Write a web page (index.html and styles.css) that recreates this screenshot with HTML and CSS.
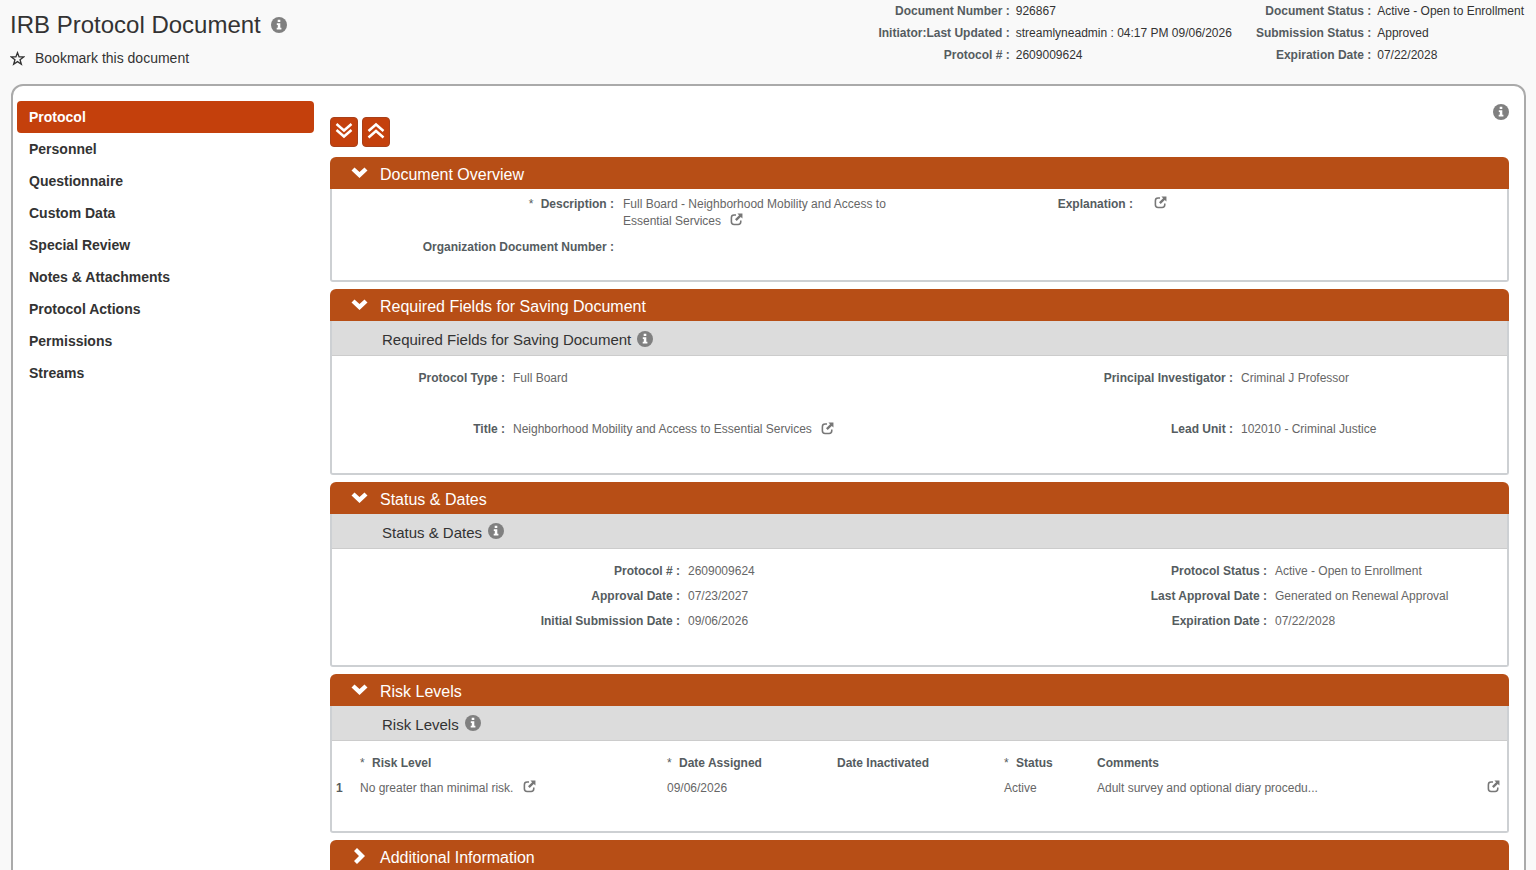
FILE: index.html
```html
<!DOCTYPE html>
<html lang="en">
<head>
    <meta charset="UTF-8">
    <meta name="viewport" content="width=device-width, initial-scale=1.0">
    <title>IRB Protocol Document</title>
    <link rel="stylesheet" href="styles.css">
</head>
<body>

    <!-- shared icons -->
    <svg class="sprite" aria-hidden="true">
        <symbol id="icon-info" viewBox="0 0 16 16">
            <circle cx="8" cy="8" r="8" fill="currentColor"/>
            <path d="M6.7 2.8h2.6v2.1H6.7zM5.8 6.2h3.5v4.6h1.1v1.7H5.7v-1.7h1.1V7.9h-1z" fill="#fff"/>
        </symbol>
        <symbol id="icon-edit" viewBox="0 0 14 14">
            <path d="M6.5 2.2H4.4A2.9 2.9 0 0 0 1.5 5.1v4.3a2.9 2.9 0 0 0 2.9 2.9h4.3a2.9 2.9 0 0 0 2.9-2.9V8.2" fill="none" stroke="currentColor" stroke-width="1.7"/>
            <path d="M8 .6h5.4V6l-1.8-1.8-4.4 4.4-1.8-1.8 4.4-4.4z" fill="currentColor"/>
        </symbol>
        <symbol id="icon-down" viewBox="0 0 16 16">
            <path d="M3 2.500l5 4.500 5-4.500 3 3-8 7.500-8-7.500z" fill="currentColor"/>
        </symbol>
        <symbol id="icon-right" viewBox="0 0 16 16">
            <path d="M5.500 0l8 8-8 8-3-3 5-5-5-5z" fill="currentColor"/>
        </symbol>
        <symbol id="icon-expand" viewBox="0 0 18 18">
            <path d="M1.500 2L9 8.500l7.500-6.500M1.500 8L9 14.500l7.500-6.500" fill="none" stroke="currentColor" stroke-width="2.500"/>
        </symbol>
        <symbol id="icon-collapse" viewBox="0 0 18 18">
            <path d="M1.500 9L9 2.500l7.500 6.500M1.500 15.500L9 9l7.500 6.500" fill="none" stroke="currentColor" stroke-width="2.500"/>
        </symbol>
        <symbol id="icon-star" viewBox="0 0 16 16">
            <path d="M8 1.800l1.700 4.500h4.900l-3.900 3 1.400 4.800L8 11.300l-4.100 2.800 1.400-4.800-3.900-3h4.900z" fill="none" stroke="currentColor" stroke-width="1.400"/>
        </symbol>
    </svg>

    <header class="doc-header">
        <div class="doc-title">
            <h1>IRB Protocol Document
                <button type="button" class="info-btn" aria-label="Document help"><svg><use href="#icon-info"/></svg></button>
            </h1>
            <button type="button" class="bookmark"><svg><use href="#icon-star"/></svg>Bookmark this document</button>
        </div>
        <div class="doc-info">
            <dl>
                <dt>Document Number :</dt><dd>926867</dd>
                <dt>Initiator:Last Updated :</dt><dd>streamlyneadmin : 04:17 PM 09/06/2026</dd>
                <dt>Protocol # :</dt><dd>2609009624</dd>
            </dl>
            <dl>
                <dt>Document Status :</dt><dd>Active - Open to Enrollment</dd>
                <dt>Submission Status :</dt><dd>Approved</dd>
                <dt>Expiration Date :</dt><dd>07/22/2028</dd>
            </dl>
        </div>
    </header>

    <div class="workspace">
        <nav class="side-nav">
            <a href="#protocol" class="active">Protocol</a>
            <a href="#personnel">Personnel</a>
            <a href="#questionnaire">Questionnaire</a>
            <a href="#custom">Custom Data</a>
            <a href="#special">Special Review</a>
            <a href="#notes">Notes &amp; Attachments</a>
            <a href="#actions">Protocol Actions</a>
            <a href="#permissions">Permissions</a>
            <a href="#streams">Streams</a>
        </nav>

        <main class="content">
            <div class="toolbar">
                <button type="button" class="tool-btn" aria-label="Expand all"><svg><use href="#icon-expand"/></svg></button>
                <button type="button" class="tool-btn" aria-label="Collapse all"><svg><use href="#icon-collapse"/></svg></button>
                <button type="button" class="info-btn page-help" aria-label="Page help"><svg><use href="#icon-info"/></svg></button>
            </div>

            <section class="panel">
                <h2><button type="button" class="panel-head" aria-expanded="true"><svg><use href="#icon-down"/></svg>Document Overview</button></h2>
                <div class="panel-body">
                    <dl class="fields overview">
                        <dt><span class="req">*</span> Description :</dt>
                        <dd>Full Board - Neighborhood Mobility and Access to Essential Services <button type="button" class="edit-btn" aria-label="Edit description"><svg><use href="#icon-edit"/></svg></button></dd>
                        <dt>Explanation :</dt>
                        <dd class="icon-only"><button type="button" class="edit-btn" aria-label="Edit explanation"><svg><use href="#icon-edit"/></svg></button></dd>
                        <dt>Organization Document Number :</dt>
                        <dd></dd>
                    </dl>
                </div>
            </section>

            <section class="panel">
                <h2><button type="button" class="panel-head" aria-expanded="true"><svg><use href="#icon-down"/></svg>Required Fields for Saving Document</button></h2>
                <div class="panel-body">
                    <h3>Required Fields for Saving Document <button type="button" class="info-btn" aria-label="Required fields help"><svg><use href="#icon-info"/></svg></button></h3>
                    <dl class="fields required">
                        <dt>Protocol Type :</dt><dd>Full Board</dd>
                        <dt>Principal Investigator :</dt><dd>Criminal J Professor</dd>
                        <dt>Title :</dt>
                        <dd>Neighborhood Mobility and Access to Essential Services <button type="button" class="edit-btn" aria-label="Edit title"><svg><use href="#icon-edit"/></svg></button></dd>
                        <dt>Lead Unit :</dt><dd>102010 - Criminal Justice</dd>
                    </dl>
                </div>
            </section>

            <section class="panel">
                <h2><button type="button" class="panel-head" aria-expanded="true"><svg><use href="#icon-down"/></svg>Status &amp; Dates</button></h2>
                <div class="panel-body">
                    <h3>Status &amp; Dates <button type="button" class="info-btn" aria-label="Status help"><svg><use href="#icon-info"/></svg></button></h3>
                    <dl class="fields dates">
                        <dt>Protocol # :</dt><dd>2609009624</dd>
                        <dt>Protocol Status :</dt><dd>Active - Open to Enrollment</dd>
                        <dt>Approval Date :</dt><dd>07/23/2027</dd>
                        <dt>Last Approval Date :</dt><dd>Generated on Renewal Approval</dd>
                        <dt>Initial Submission Date :</dt><dd>09/06/2026</dd>
                        <dt>Expiration Date :</dt><dd>07/22/2028</dd>
                    </dl>
                </div>
            </section>

            <section class="panel">
                <h2><button type="button" class="panel-head" aria-expanded="true"><svg><use href="#icon-down"/></svg>Risk Levels</button></h2>
                <div class="panel-body">
                    <h3>Risk Levels <button type="button" class="info-btn" aria-label="Risk levels help"><svg><use href="#icon-info"/></svg></button></h3>
                    <table class="risk-table">
                        <thead>
                            <tr>
                                <th class="col-num"></th>
                                <th class="col-level"><span class="req">*</span> Risk Level</th>
                                <th class="col-assigned"><span class="req">*</span> Date Assigned</th>
                                <th class="col-inactive">Date Inactivated</th>
                                <th class="col-status"><span class="req">*</span> Status</th>
                                <th>Comments</th>
                                <th class="col-edit"></th>
                            </tr>
                        </thead>
                        <tbody>
                            <tr>
                                <th scope="row">1</th>
                                <td>No greater than minimal risk. <button type="button" class="edit-btn" aria-label="Edit risk level"><svg><use href="#icon-edit"/></svg></button></td>
                                <td>09/06/2026</td>
                                <td></td>
                                <td>Active</td>
                                <td>Adult survey and optional diary procedu...</td>
                                <td><button type="button" class="edit-btn last" aria-label="Edit comments"><svg><use href="#icon-edit"/></svg></button></td>
                            </tr>
                        </tbody>
                    </table>
                </div>
            </section>

            <section class="panel">
                <h2><button type="button" class="panel-head" aria-expanded="false"><svg><use href="#icon-right"/></svg>Additional Information</button></h2>
            </section>
        </main>
    </div>

</body>
</html>
```
FILE: styles.css
```css
* {
    box-sizing: border-box;
}
body {
    margin: 0;
    background-color: #f9f9f9;
    font-family: "Liberation Sans", Arial, sans-serif;
    font-size: 12px;
    line-height: 17px;
    color: #666;
}
h1, h2, h3, dl, dd {
    margin: 0;
    font-weight: normal;
}
button {
    padding: 0;
    border: none;
    background: none;
    color: inherit;
    font: inherit;
    cursor: pointer;
}
svg {
    display: block;
}
.sprite {
    display: none;
}

/* header */
.doc-header {
    display: flex;
    justify-content: space-between;
    min-height: 84px;
    padding: 0 12px 0 10px;
}
.doc-title {
    padding-top: 10px;
}
h1 {
    display: flex;
    align-items: center;
    gap: 10px;
    font-size: 24px;
    line-height: 30px;
    color: #333;
}
.bookmark {
    display: flex;
    align-items: center;
    gap: 10px;
    margin-top: 8px;
    font-size: 14px;
    line-height: 20px;
    color: #333;
}
.bookmark svg {
    width: 15px;
    height: 15px;
}
.info-btn {
    color: #808080;
}
.info-btn svg {
    width: 16px;
    height: 16px;
}
.doc-info {
    display: flex;
    gap: 24px;
}
.doc-info dl {
    display: grid;
    grid-template-columns: auto auto;
    grid-auto-rows: 22px;
    column-gap: 6px;
    line-height: 22px;
}
.doc-info dd {
    color: #333;
}
dt {
    font-weight: bold;
    text-align: right;
    color: #555c60;
}

/* main frame */
.workspace {
    display: flex;
    gap: 16px;
    margin: 0 10px 0 11px;
    padding: 15px 15px 20px 4px;
    background: #fff;
    border: 2px solid #aaa;
    border-radius: 12px;
}
.side-nav {
    display: flex;
    flex-direction: column;
    flex: 0 0 297px;
}
.side-nav a {
    padding: 0 12px;
    font-size: 14px;
    font-weight: bold;
    line-height: 32px;
    color: #333;
    text-decoration: none;
    border-radius: 4px;
}
.side-nav a.active {
    background-color: #c4400c;
    color: #fff;
}
.content {
    flex: 1;
    min-width: 0;
}
.toolbar {
    display: flex;
    align-items: flex-end;
    gap: 4px;
    height: 46px;
    margin-bottom: 10px;
}
.tool-btn {
    display: flex;
    align-items: center;
    justify-content: center;
    width: 28px;
    height: 30px;
    padding-bottom: 2px;
    background-color: #c4400c;
    border: 1px solid #a8401a;
    border-radius: 4px;
    color: #fff;
}
.tool-btn svg {
    width: 18px;
    height: 18px;
}
.page-help {
    align-self: flex-start;
    margin-left: auto;
    padding-top: 3px;
}

/* panels */
.panel {
    margin-bottom: 7px;
}
.panel-head {
    display: flex;
    align-items: center;
    gap: 12px;
    width: 100%;
    height: 32px;
    padding: 3px 21px 0;
    background-color: #b74e16;
    border-radius: 6px 6px 0 0;
    color: #fff;
    font-size: 16px;
}
.panel-head svg {
    width: 17px;
    height: 16px;
    margin-bottom: 3px;
}
.panel-body {
    border: 2px solid #cdd0d3;
    border-top: none;
    border-radius: 0 0 3px 3px;
}
h3 {
    display: flex;
    align-items: center;
    gap: 6px;
    height: 35px;
    padding: 3px 50px 0;
    background-color: #dcdcdc;
    border-bottom: 1px solid #ccc;
    font-size: 15px;
    color: #333;
}
h3 .info-btn {
    margin-bottom: 2px;
}
.fields {
    display: grid;
    row-gap: 8px;
    padding: 14px 0 34px;
}
.fields dd {
    padding-left: 8px;
}
.fields.overview {
    grid-template-columns: 282fr 305fr 214fr 374fr;
    row-gap: 9px;
    padding: 7px 0 24px;
}
.fields.overview dd {
    padding-left: 9px;
}
.fields.required {
    grid-template-columns: 173fr 487fr 241fr 274fr;
    row-gap: 34px;
}
.fields.dates {
    grid-template-columns: 348fr 347fr 240fr 240fr;
    padding-bottom: 35px;
}
.req {
    margin-right: 4px;
    font-weight: normal;
}
.edit-btn {
    margin-left: 6px;
    padding-bottom: 4px;
    vertical-align: middle;
    line-height: 13px;
    color: #777;
}
.edit-btn svg {
    width: 13px;
    height: 13px;
}
.edit-btn.last {
    margin-left: 0;
}
.fields.overview .icon-only {
    padding-left: 15px;
}

/* risk table */
.risk-table {
    width: 100%;
    margin: 10px 0 30px;
    border-collapse: collapse;
    table-layout: fixed;
}
.risk-table th, .risk-table td {
    padding: 4px 0;
    text-align: left;
}
.risk-table th {
    color: #555c60;
}
.risk-table tbody th {
    padding-left: 4px;
}
.col-num {
    width: 28px;
}
.col-level {
    width: 307px;
}
.col-assigned {
    width: 170px;
}
.col-inactive {
    width: 167px;
}
.col-status {
    width: 93px;
}
.col-edit {
    width: 20px;
}
```
